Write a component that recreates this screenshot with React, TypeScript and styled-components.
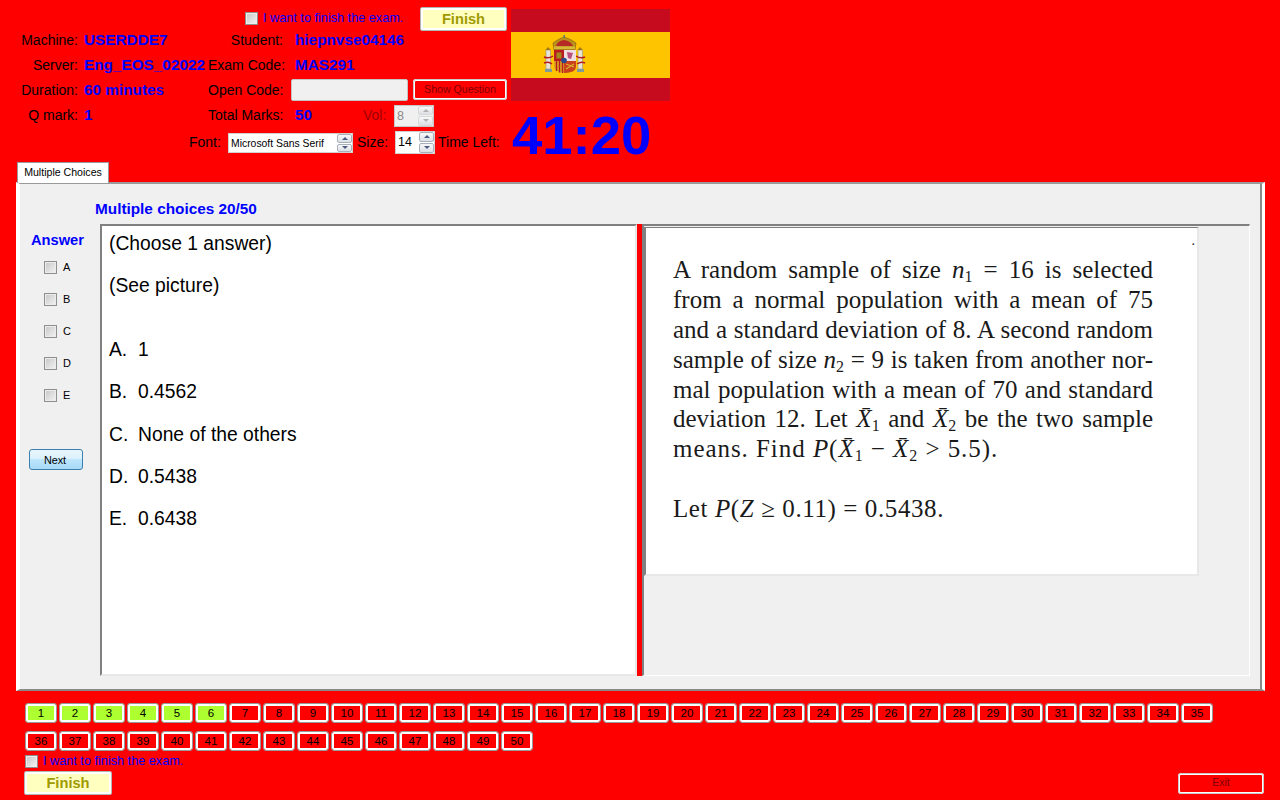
import styled, { createGlobalStyle } from 'styled-components'

const Global = createGlobalStyle`
  html, body { margin: 0; padding: 0; background: #ff0000; }
  body { font-family: "Liberation Sans", Arial, sans-serif; }
  * { box-sizing: border-box; }
`

const Page = styled.div`
  width: 1280px;
  height: 800px;
  overflow: hidden;
  background: #ff0000;
  display: flex;
  flex-direction: column;
`

const Header = styled.header`
  height: 162px;
  display: flex;
`

const Info = styled.div`
  width: 511px;
  flex: none;
  font-size: 14px;
  color: #000;
`

const TopRow = styled.div`
  height: 27px;
  padding: 7px 4px 0 245px;
  display: flex;
  align-items: flex-start;
`

const FinishCheck = styled.label`
  height: 24px;
  width: 175px;
  display: flex;
  align-items: center;
  gap: 5px;
  margin-top: -1px;
  color: #0000ff;
  font-size: 12.7px;
  white-space: nowrap;
`

const Check = styled.input.attrs({ type: 'checkbox' })`
  appearance: none;
  width: 13px;
  height: 13px;
  margin: 0;
  flex: none;
  border: 1px solid #8e8f8f;
  background: linear-gradient(135deg, #c6c6c6, #f4f4f4);
  box-shadow: inset 0 0 0 1px #ececec;
`

const FinishButton = styled.button<{ $w: number }>`
  width: ${(p) => p.$w}px;
  height: 24px;
  flex: none;
  padding: 0;
  border: 1px solid #b4b4b4;
  border-radius: 2px;
  box-shadow: inset 0 0 0 2px #fff;
  background: #ffffc0;
  color: #a09a00;
  font: bold 14.67px "Liberation Sans", Arial, sans-serif;
`

const InfoRow = styled.div`
  height: 25px;
  display: grid;
  grid-template-columns: 78px 130px 75px 1fr;
  align-items: center;
`

const Label = styled.span`
  text-align: right;
  white-space: nowrap;
`

const Value = styled.b`
  color: #0000ff;
  font-size: 15.33px;
  white-space: nowrap;
`

const MainValue = styled(Value)`
  padding-left: 6px;
`

const SideCell = styled.div<{ $pad: number }>`
  display: flex;
  align-items: center;
  padding-left: ${(p) => p.$pad}px;
`

const OpenCode = styled.div`
  width: 117px;
  height: 22px;
  margin-right: 5px;
  background: #f0f0f0;
  border: 1px solid #c4c4c4;
  border-radius: 2px;
`

const RedButton = styled.button<{ $w: number; $h: number }>`
  width: ${(p) => p.$w}px;
  height: ${(p) => p.$h}px;
  padding: 0 0 2px;
  background: #ff0000;
  border: 2px solid #fff;
  border-radius: 3px;
  outline: 1px solid #c8c8c8;
  outline-offset: -1px;
  color: #800000;
  font: 10.6px "Liberation Sans", Arial, sans-serif;
`

const Spinner = styled.div<{ $disabled?: boolean; $w: number; $h: number; $mt?: number }>`
  width: ${(p) => p.$w}px;
  height: ${(p) => p.$h}px;
  margin-top: ${(p) => p.$mt ?? 0}px;
  flex: none;
  display: flex;
  align-items: center;
  justify-content: space-between;
  padding-left: 2px;
  white-space: nowrap;
  border: 1px solid ${(p) => (p.$disabled ? '#c8c8c8' : '#d0d0d0')};
  background: ${(p) => (p.$disabled ? '#f0f0f0' : '#fff')};
  color: ${(p) => (p.$disabled ? '#8a8a8a' : '#000')};
  font-size: ${(p) => (p.$w > 100 ? 10.4 : 12.5)}px;
`

const SpinArrows = styled.div`
  width: 15px;
  height: 100%;
  flex: none;
  display: flex;
  flex-direction: column;
  gap: 1px;
`

const SpinArrow = styled.span<{ $down?: boolean; $disabled?: boolean }>`
  flex: 1;
  display: flex;
  align-items: center;
  justify-content: center;
  border: 1px solid ${(p) => (p.$disabled ? '#d8d8d8' : '#a8b0bc')};
  border-radius: 2px;
  background: linear-gradient(#f8f8f8, #dcdfe4);

  &::before {
    content: '';
    border-left: 3px solid transparent;
    border-right: 3px solid transparent;
    ${(p) => (p.$down ? 'border-top' : 'border-bottom')}: 3px solid ${(p) =>
      p.$disabled ? '#b0b0b0' : '#4a5a80'};
  }
`

const FontRow = styled.div`
  margin-top: 3px;
  padding-left: 189px;
  height: 24px;
  display: flex;
  align-items: center;
`

const FontLabel = styled.span<{ $w: number; $ml?: number; $dim?: boolean }>`
  width: ${(p) => p.$w}px;
  margin-left: ${(p) => p.$ml ?? 0}px;
  flex: none;
  white-space: nowrap;
  color: ${(p) => (p.$dim ? '#a00000' : 'inherit')};
`

const MarksValue = styled(Value)`
  width: 68px;
`

const FlagColumn = styled.div`
  padding-top: 9px;
`

const Flag = styled.svg`
  display: block;
`

const Timer = styled.div`
  margin-top: 7px;
  padding-left: 1px;
  height: 56px;
  line-height: 56px;
  font-size: 54.5px;
  font-weight: bold;
  color: #0000ff;
  white-space: nowrap;
`

const TabArea = styled.main`
  padding-left: 16px;
  display: flex;
  flex-direction: column;
`

const Tab = styled.div`
  margin-left: 1px;
  width: 92px;
  height: 21px;
  background: #fff;
  border: 1px solid #9a9a9a;
  border-bottom: none;
  font-size: 10.6px;
  line-height: 19px;
  text-align: center;
  position: relative;
  z-index: 1;
  margin-bottom: -1px;
`

const TabPanel = styled.section`
  width: 1249px;
  height: 509px;
  background: #f0f0f0;
  border-left: 4px solid #fff;
  border-right: 3px solid #fff;
  border-top: 2px solid #9a9a9a;
  border-bottom: 2px solid #8a8a8a;
  box-shadow: inset -2px 0 0 #8a8a8a;
`

const PanelTitle = styled.h2`
  margin: 0;
  height: 40px;
  padding: 17px 0 0 75px;
  font-size: 15.33px;
  line-height: 16px;
  color: #0000ff;
`

const Columns = styled.div`
  display: flex;
  height: 452px;
`

const AnswerColumn = styled.div`
  width: 80px;
  flex: none;
  padding-left: 11px;
`

const AnswerTitle = styled.div`
  margin-top: 7px;
  height: 20px;
  font-size: 14.67px;
  font-weight: bold;
  color: #0000ff;
  line-height: 18px;
`

const Option = styled.label`
  height: 32px;
  padding-left: 13px;
  display: flex;
  align-items: center;
  gap: 6px;
  font-size: 11px;
  color: #000;
`

const NextButton = styled.button`
  display: block;
  margin: 38px 0 0 -2px;
  width: 54px;
  height: 21px;
  padding: 0 2px 0 0;
  border: 1px solid #3c7fb1;
  border-radius: 3px;
  background: linear-gradient(#eaf6fd 0%, #d9f0fc 50%, #bee6fd 50%, #a7d9f5 100%);
  font: 10.8px "Liberation Sans", Arial, sans-serif;
  color: #000;
`

const QuestionPane = styled.div`
  width: 537px;
  flex: none;
  background: #fff;
  border: 2px solid;
  border-color: #808080 #e8e8e8 #e8e8e8 #808080;
  padding: 7px 7px;
  font-size: 19.3px;
  color: #000;
`

const Line = styled.p<{ $gap?: number }>`
  margin: 0 0 ${(p) => p.$gap ?? 21}px;
  line-height: 21.3px;
  display: flex;
`

const Marker = styled.span`
  width: 29px;
  flex: none;
`

const Splitter = styled.div`
  width: 5px;
  flex: none;
  background: #ff0000;
`

const ImagePane = styled.div`
  width: 608px;
  flex: none;
  padding-top: 1px;
  border-top: 2px solid #808080;
  border-left: 2px solid #808080;
  border-right: 1px solid #fff;
  border-bottom: 1px solid #fff;
  background: #f0f0f0;
`

const Figure = styled.div`
  position: relative;
  width: 555px;
  height: 349px;
  background: #fff;
  border-style: solid;
  border-width: 1px 2px 2px 2px;
  border-color: #808080 #e8e8e8 #e8e8e8 #808080;
  padding: 27px 0 0 27px;
  font-family: "Liberation Serif", "Times New Roman", serif;
  font-size: 25px;
  color: #1a1a1a;
`

const Dot = styled.span`
  position: absolute;
  top: 5px;
  right: 2px;
  font-size: 14px;
`

const MathLine = styled.div<{ $loose?: boolean; $gap?: number; $spacing?: number }>`
  width: 480px;
  height: 29.9px;
  line-height: 29.9px;
  white-space: nowrap;
  letter-spacing: ${(p) => p.$spacing ?? 0}px;
  text-align: ${(p) => (p.$loose ? 'left' : 'justify')};
  text-align-last: ${(p) => (p.$loose ? 'left' : 'justify')};
  margin-bottom: ${(p) => p.$gap ?? 0}px;
`

const Var = styled.i``

const Sub = styled.span`
  font-size: 16px;
  line-height: 0;
  vertical-align: -4px;
`

const Footer = styled.footer`
  padding: 12px 16px 0 25px;
`

const QuestionGrid = styled.div`
  display: grid;
  grid-template-columns: repeat(35, 32px);
  grid-auto-rows: 20px;
  gap: 8px 2px;
`

const QuestionButton = styled.button<{ $done?: boolean }>`
  padding: 0;
  border: 1px solid #999;
  border-radius: 3px;
  box-shadow: inset 0 0 0 2px #fff;
  background: ${(p) => (p.$done ? '#adff2f' : '#ff0000')};
  color: #000;
  font: 11.5px "Liberation Sans", Arial, sans-serif;
`

const BottomCheck = styled.label`
  margin-top: 2px;
  height: 16px;
  display: flex;
  align-items: center;
  gap: 5px;
  font-size: 12.7px;
  color: #0000ff;
`

const BottomRow = styled.div`
  margin: 2px 0 0 -1px;
  display: flex;
  justify-content: space-between;
  align-items: flex-start;
`

const ExitSlot = styled.div`
  padding-top: 1px;
`

function SpinBox({ value, disabled, w, h, mt }: { value: string; disabled?: boolean; w: number; h: number; mt?: number }) {
  return (
    <Spinner $disabled={disabled} $w={w} $h={h} $mt={mt}>
      {value}
      <SpinArrows>
        <SpinArrow $disabled={disabled} />
        <SpinArrow $down $disabled={disabled} />
      </SpinArrows>
    </Spinner>
  )
}

function SpainFlag() {
  return (
    <Flag width="159" height="92" viewBox="0 0 159 92">
      <rect width="159" height="92" fill="#c60b1e" />
      <rect y="23" width="159" height="46" fill="#ffc400" />
      {/* pillars */}
      <rect x="35" y="41" width="4.500" height="19" fill="#e8e4d8" stroke="#a09a80" strokeWidth="0.7" />
      <rect x="67" y="41" width="4.500" height="19" fill="#e8e4d8" stroke="#a09a80" strokeWidth="0.7" />
      <path d="M34.500 41 L37 38 L40 41 Z M66.500 41 L69 38 L72 41 Z" fill="#a07a10" />
      <rect x="34" y="60" width="7" height="3" fill="#7f9a98" />
      <rect x="66" y="60" width="7" height="3" fill="#7f9a98" />
      <path d="M33 48 Q38 50 42 47 M33 54 Q38 52 41 55 M65 47 Q69 50 74 48 M66 55 Q70 52 74 54" fill="none" stroke="#b81c20" strokeWidth="1.5" />
      {/* crown */}
      <path d="M43 41 L42 34 Q47 30 53 28 Q60 30 65 34 L64 41 Z" fill="#b8921a" stroke="#8a5a10" strokeWidth="0.6" />
      <path d="M45 37 Q46 32 53 31 Q60 32 62 37 Z" fill="#b52a25" />
      <rect x="43" y="37.500" width="21" height="2.500" fill="#d8b838" />
      <rect x="52.500" y="26" width="1.500" height="3" fill="#5a7a70" />
      {/* shield */}
      <path d="M43 41 H53 V52 H43 Z" fill="#b81c20" />
      <rect x="45.500" y="43.500" width="5" height="6" fill="#a08a20" />
      <path d="M53 41 H65 V52 H53 Z" fill="#f0dfe0" />
      <path d="M56 43 L62 44 L60 50 L57 49 Z" fill="#b85080" />
      <path d="M43 52 H53 V64 Q49 64 46 62 Q43 60 43 56 Z" fill="#d8a020" />
      <path d="M45.500 52 V62 M48.500 52 V63.500 M51.500 52 V64" stroke="#b81c20" strokeWidth="1.3" />
      <path d="M53 52 H65 V57 Q65 62 60 63 Q57 64 53 64 Z" fill="#c8401c" />
      <path d="M55 55 L63 58 M63 55 L55 60" stroke="#d8b030" strokeWidth="1.2" />
      <circle cx="53" cy="51.500" r="2.800" fill="#2a4a90" />
    </Flag>
  )
}

const questionNumbers = Array.from({ length: 50 }, (_, i) => i + 1)

function App() {
  return (
    <Page>
      <Global />
      <Header>
        <Info>
          <TopRow>
            <FinishCheck>
              <Check />I want to finish the exam.
            </FinishCheck>
            <FinishButton $w={87}>Finish</FinishButton>
          </TopRow>
          <InfoRow>
            <Label>Machine:</Label>
            <MainValue>USERDDE7</MainValue>
            <Label>Student:</Label>
            <SideCell $pad={12}>
              <Value>hiepnvse04146</Value>
            </SideCell>
          </InfoRow>
          <InfoRow>
            <Label>Server:</Label>
            <MainValue>Eng_EOS_02022</MainValue>
            <Label>Exam Code:</Label>
            <SideCell $pad={12}>
              <Value>MAS291</Value>
            </SideCell>
          </InfoRow>
          <InfoRow>
            <Label>Duration:</Label>
            <MainValue>60 minutes</MainValue>
            <Label>Open Code:</Label>
            <SideCell $pad={8}>
              <OpenCode />
              <RedButton $w={94} $h={21}>
                Show Question
              </RedButton>
            </SideCell>
          </InfoRow>
          <InfoRow>
            <Label>Q mark:</Label>
            <MainValue>1</MainValue>
            <Label>Total Marks:</Label>
            <SideCell $pad={12}>
              <MarksValue>50</MarksValue>
              <FontLabel $w={31} $dim>
                Vol:
              </FontLabel>
              <SpinBox value="8" disabled w={40} h={22} mt={2} />
            </SideCell>
          </InfoRow>
          <FontRow>
            <FontLabel $w={39}>Font:</FontLabel>
            <Spinner $w={125} $h={20} $mt={2}>
              Microsoft Sans Serif
              <SpinArrows>
                <SpinArrow />
                <SpinArrow $down />
              </SpinArrows>
            </Spinner>
            <FontLabel $w={38} $ml={4}>
              Size:
            </FontLabel>
            <SpinBox value="14" w={40} h={23} />
            <FontLabel $w={64} $ml={3}>
              Time Left:
            </FontLabel>
          </FontRow>
        </Info>
        <FlagColumn>
          <SpainFlag />
          <Timer>41:20</Timer>
        </FlagColumn>
      </Header>

      <TabArea>
        <Tab>Multiple Choices</Tab>
        <TabPanel>
          <PanelTitle>Multiple choices 20/50</PanelTitle>
          <Columns>
            <AnswerColumn>
              <AnswerTitle>Answer</AnswerTitle>
              {['A', 'B', 'C', 'D', 'E'].map((letter) => (
                <Option key={letter}>
                  <Check />
                  {letter}
                </Option>
              ))}
              <NextButton>Next</NextButton>
            </AnswerColumn>
            <QuestionPane>
              <Line>(Choose 1 answer)</Line>
              <Line $gap={42.6}>(See picture)</Line>
              {[
                ['A.', '1'],
                ['B.', '0.4562'],
                ['C.', 'None of the others'],
                ['D.', '0.5438'],
                ['E.', '0.6438'],
              ].map(([mark, text]) => (
                <Line key={mark}>
                  <Marker>{mark}</Marker>
                  {text}
                </Line>
              ))}
            </QuestionPane>
            <Splitter />
            <ImagePane>
              <Figure>
                <Dot>.</Dot>
                <MathLine>
                  A random sample of size <Var>n</Var>
                  <Sub>1</Sub> = 16 is selected
                </MathLine>
                <MathLine>from a normal population with a mean of 75</MathLine>
                <MathLine>and a standard deviation of 8. A second random</MathLine>
                <MathLine>
                  sample of size <Var>n</Var>
                  <Sub>2</Sub> = 9 is taken from another nor-
                </MathLine>
                <MathLine>mal population with a mean of 70 and standard</MathLine>
                <MathLine>
                  deviation 12. Let <Var>X&#772;</Var>
                  <Sub>1</Sub> and <Var>X&#772;</Var>
                  <Sub>2</Sub> be the two sample
                </MathLine>
                <MathLine $loose $gap={29.5} $spacing={0.95}>
                  means. Find <Var>P</Var>(<Var>X&#772;</Var>
                  <Sub>1</Sub> − <Var>X&#772;</Var>
                  <Sub>2</Sub> &gt; 5.5).
                </MathLine>
                <MathLine $loose $spacing={0.6}>
                  Let <Var>P</Var>(<Var>Z</Var> ≥ 0.11) = 0.5438.
                </MathLine>
              </Figure>
            </ImagePane>
          </Columns>
        </TabPanel>
      </TabArea>

      <Footer>
        <QuestionGrid>
          {questionNumbers.map((n) => (
            <QuestionButton key={n} $done={n <= 6}>
              {n}
            </QuestionButton>
          ))}
        </QuestionGrid>
        <BottomCheck>
          <Check />I want to finish the exam.
        </BottomCheck>
        <BottomRow>
          <FinishButton $w={88}>Finish</FinishButton>
          <ExitSlot>
            <RedButton $w={86} $h={21}>
              Exit
            </RedButton>
          </ExitSlot>
        </BottomRow>
      </Footer>
    </Page>
  )
}

export default App
